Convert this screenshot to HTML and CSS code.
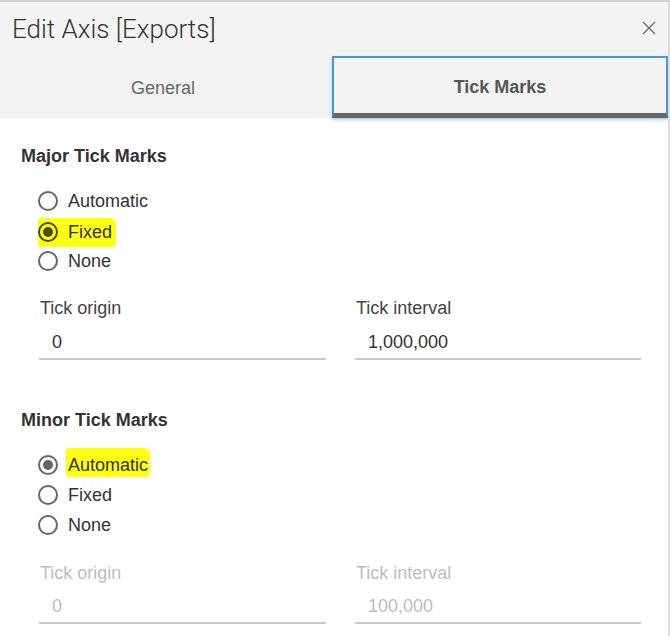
FILE: index.html
```html
<!DOCTYPE html>
<html>
<head>
<meta charset="utf-8">
<link rel="stylesheet" href="styles.css">
</head>
<body>
<div class="dialog">
  <div class="header">
    <div class="title">Edit Axis [Exports]</div>
    <svg class="close" width="14" height="14" viewBox="0 0 14 14"><path d="M1 1 L13 13 M13 1 L1 13" stroke="#666" stroke-width="1.3" fill="none"/></svg>
  </div>
  <div class="tabs">
    <div class="tab general">General</div>
    <div class="tab active">Tick Marks</div>
  </div>
  <div class="body">
    <div class="heading">Major Tick Marks</div>
    <div class="radios">
      <div class="radio"><span class="circle"></span><span class="label">Automatic</span></div>
      <div class="radio"><span class="mark mark-row"><span class="circle on dark"></span><span class="label">Fixed</span></span></div>
      <div class="radio"><span class="circle"></span><span class="label">None</span></div>
    </div>
    <div class="fields">
      <div class="field">
        <div class="flabel">Tick origin</div>
        <div class="fvalue">0</div>
      </div>
      <div class="field">
        <div class="flabel">Tick interval</div>
        <div class="fvalue">1,000,000</div>
      </div>
    </div>

    <div class="heading minor">Minor Tick Marks</div>
    <div class="radios">
      <div class="radio"><span class="circle on"></span><span class="label mark mark-text">Automatic</span></div>
      <div class="radio"><span class="circle"></span><span class="label">Fixed</span></div>
      <div class="radio"><span class="circle"></span><span class="label">None</span></div>
    </div>
    <div class="fields disabled">
      <div class="field">
        <div class="flabel">Tick origin</div>
        <div class="fvalue">0</div>
      </div>
      <div class="field">
        <div class="flabel">Tick interval</div>
        <div class="fvalue">100,000</div>
      </div>
    </div>
  </div>
</div>
</body>
</html>
```
FILE: styles.css
```css
html, body {
  margin: 0;
  padding: 0;
  background: #ffffff;
}
body {
  font-family: "Liberation Sans", Arial, sans-serif;
  color: #333;
}
.dialog {
  width: 668px;
  height: 634px;
  border-top: 2px solid #d2d2d2;
  border-right: 2px solid #dcdcdc;
  overflow: hidden;
  background: #fff;
}
.header {
  height: 54px;
  background: #f3f3f3;
  display: flex;
  align-items: center;
  justify-content: space-between;
  padding: 0 12px 0 12px;
}
.title {
  font-family: Roboto, "Liberation Sans", sans-serif;
  font-weight: 300;
  font-size: 26px;
  color: #333;
  margin-top: -1px;
}
.close {
  display: block;
  margin-top: -2px;
}
.tabs {
  display: flex;
  background: #f3f3f3;
  height: 62px;
}
.tab {
  display: flex;
  align-items: center;
  justify-content: center;
  font-size: 18px;
  color: #666;
  padding-top: 2px;
}
.tab.general {
  flex: 0 0 326px;
  padding-right: 6px;
}
.tab.active {
  flex: 1 1 auto;
  box-sizing: border-box;
  border: 2px solid #4a96d2;
  border-bottom: 5px solid #666;
  font-weight: bold;
  color: #555;
  box-shadow: 0 2px 3px rgba(74, 150, 210, 0.45);
  padding-top: 4px;
}
.body {
  padding-top: 27px;
}
.heading {
  font-weight: bold;
  font-size: 18px;
  line-height: 22px;
  color: #333;
  padding-left: 21px;
}
.heading.minor {
  margin-top: 49px;
}
.radios {
  margin-top: 19px;
  padding-left: 38px;
}
.radio {
  height: 30px;
  display: flex;
  align-items: center;
  font-size: 18px;
  color: #333;
}
.circle {
  box-sizing: border-box;
  width: 20px;
  height: 20px;
  border: 2px solid #666;
  border-radius: 50%;
  display: inline-flex;
  align-items: center;
  justify-content: center;
  flex: 0 0 20px;
}
.circle.on::after {
  content: "";
  width: 10px;
  height: 10px;
  border-radius: 50%;
  background: #666;
}
.circle.dark {
  border-color: #4a4a20;
}
.circle.dark::after {
  background: #4a4a20;
}
.label {
  margin-left: 10px;
  line-height: 22px;
}
.mark {
  background: #ffff10;
  border-radius: 3px 6px 4px 2px;
}
.mark-row {
  display: inline-flex;
  align-items: center;
  height: 29px;
  padding-right: 4px;
  margin-top: 2px;
}
.mark-text {
  margin-left: 8px;
  padding: 6px 2px 1px;
  margin-top: -5px;
}
.fields {
  display: grid;
  grid-template-columns: 287px 286px;
  column-gap: 29px;
  padding-left: 39px;
  margin-top: 21px;
}
.fields.disabled {
  margin-top: 22px;
}
.field {
  display: flex;
  flex-direction: column;
}
.flabel {
  font-size: 18px;
  line-height: 22px;
  color: #444;
  padding-left: 1px;
}
.fvalue {
  margin-top: 12px;
  font-size: 18px;
  line-height: 22px;
  color: #333;
  padding: 0 0 5px 13px;
  border-bottom: 2px solid #c8c8c8;
}
.fields.disabled .flabel,
.fields.disabled .fvalue {
  color: #bdbdbd;
}
.fields.disabled .fvalue {
  margin-top: 11px;
}
```
